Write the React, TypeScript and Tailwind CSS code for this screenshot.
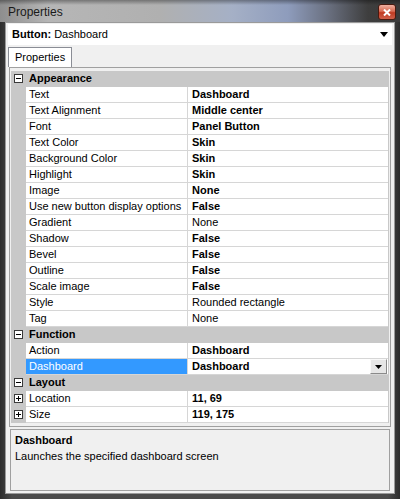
import React from 'react';

type Row = { name: string; value: string; bold?: boolean; selected?: boolean; expand?: boolean };

const appearance: Row[] = [
  { name: 'Text', value: 'Dashboard', bold: true },
  { name: 'Text Alignment', value: 'Middle center', bold: true },
  { name: 'Font', value: 'Panel Button', bold: true },
  { name: 'Text Color', value: 'Skin', bold: true },
  { name: 'Background Color', value: 'Skin', bold: true },
  { name: 'Highlight', value: 'Skin', bold: true },
  { name: 'Image', value: 'None', bold: true },
  { name: 'Use new button display options', value: 'False', bold: true },
  { name: 'Gradient', value: 'None' },
  { name: 'Shadow', value: 'False', bold: true },
  { name: 'Bevel', value: 'False', bold: true },
  { name: 'Outline', value: 'False', bold: true },
  { name: 'Scale image', value: 'False', bold: true },
  { name: 'Style', value: 'Rounded rectangle' },
  { name: 'Tag', value: 'None' },
];

const func: Row[] = [
  { name: 'Action', value: 'Dashboard', bold: true },
  { name: 'Dashboard', value: 'Dashboard', bold: true, selected: true },
];

const layout: Row[] = [
  { name: 'Location', value: '11, 69', bold: true, expand: true },
  { name: 'Size', value: '119, 175', bold: true, expand: true },
];

// little [-] / [+] box in the left margin
function Expander({ plus }: { plus?: boolean }) {
  return (
    <svg width="9" height="9" viewBox="0 0 9 9" className="block">
      <rect x="0.5" y="0.5" width="8" height="8" fill="#ffffff" stroke="#3a3a3a" />
      <line x1="2" y1="4.5" x2="7" y2="4.5" stroke="#000" />
      {plus && <line x1="4.5" y1="2" x2="4.5" y2="7" stroke="#000" />}
    </svg>
  );
}

function Category({ title }: { title: string }) {
  return (
    <div className="flex h-[16px] bg-[#c8c8c8]">
      <div className="w-[15px] flex items-center justify-center pb-[1px]">
        <Expander />
      </div>
      <div className="pl-[3px] font-bold leading-[15px] text-black">{title}</div>
    </div>
  );
}

function PropRow({ row }: { row: Row }) {
  return (
    <div className="flex h-[16px]">
      <div className="w-[15px] shrink-0 bg-[#c8c8c8] flex items-center justify-center pb-[1px]">
        {row.expand && <Expander plus />}
      </div>
      <div
        className={`w-[162px] shrink-0 border-b border-r border-[#d6d6d6] pl-[3px] leading-[15px] whitespace-nowrap overflow-hidden ${
          row.selected ? 'bg-[#3399ff] text-white' : 'bg-white text-black'
        }`}
      >
        {row.name}
      </div>
      <div className="flex-1 flex items-start border-b border-[#d6d6d6] bg-white pl-[4px] leading-[15px] text-black">
        <span className={`flex-1 ${row.bold ? 'font-bold' : ''}`}>{row.value}</span>
        {row.selected && (
          <div className="w-[17px] h-[15px] mr-[1px] flex items-center justify-center bg-[#e6e6e6] border border-[#8a8a8a] border-t-[#f8f8f8] border-l-[#f8f8f8]">
            <svg width="7" height="4" viewBox="0 0 7 4">
              <path d="M0 0h7L3.5 4z" fill="#000" />
            </svg>
          </div>
        )}
      </div>
    </div>
  );
}

export default function App() {
  return (
    <div className="w-[400px] h-[499px] flex flex-col bg-[linear-gradient(to_right,#2c2c2c_0%,#4a4a4a_3%,#4a4a4a_97%,#2c2c2c_100%)] font-['Liberation_Sans',Arial,sans-serif] text-[11px] overflow-hidden">
      {/* title bar */}
      <div className="h-[22px] shrink-0 flex items-center justify-between pl-[8px] pr-[4px] bg-[linear-gradient(to_bottom,rgba(0,0,0,0.35)_0px,rgba(0,0,0,0)_5px),linear-gradient(to_right,#8e8e8e_0%,#b6b6b6_12%,#b0b0b0_40%,#a5b0c6_58%,#8e9cbc_72%,#6a7080_82%,#3e3e3e_92%,#3a3a3a_100%)]">
        <span className="text-[12px] text-[#1a1a1a] leading-none pt-[1px]">Properties</span>
        <div className="w-[18px] h-[16px] mt-[2px] rounded-[3px] border border-[#4a1a10] flex items-center justify-center bg-[linear-gradient(to_bottom,#f0b0a0_0%,#d86a52_45%,#c03a22_55%,#d0604a_100%)]">
          <svg width="8" height="7" viewBox="0 0 8 7">
            <path d="M1 0.5L7 6.5M7 0.5L1 6.5" stroke="#fff" strokeWidth="2" />
          </svg>
        </div>
      </div>

      {/* client area */}
      <div className="flex-1 mx-[5px] mb-[5px] flex flex-col border border-[#9a9a9a] bg-[#f0f0f0]">
        {/* object combo */}
        <div className="h-[21px] mx-[2px] mt-[1px] shrink-0 flex items-center justify-between bg-white pl-[4px] pr-[4px] text-black">
          <span>
            <span className="font-bold">Button:</span> Dashboard
          </span>
          <svg width="8" height="5" viewBox="0 0 8 5">
            <path d="M0 0h8L4 5z" fill="#000" />
          </svg>
        </div>

        {/* tab strip */}
        <div className="h-[22px] shrink-0 flex items-end px-[2px]">
          <div className="h-[20px] px-[6px] flex items-center bg-white border border-b-0 border-[#8a8d95] text-black">
            Properties
          </div>
        </div>

        {/* property grid */}
        <div className="mx-[3px] shrink-0 border border-[#a0a0a0] bg-[#f0f0f0] p-[1px] pt-[3px]">
          <div className="border-r border-[#c8c8c8]">
            <Category title="Appearance" />
            {appearance.map((r) => (
              <PropRow key={r.name} row={r} />
            ))}
            <Category title="Function" />
            {func.map((r) => (
              <PropRow key={r.name + (r.selected ? 's' : '')} row={r} />
            ))}
            <Category title="Layout" />
            {layout.map((r) => (
              <PropRow key={r.name} row={r} />
            ))}
          </div>
          <div className="h-[2px]" />
        </div>

        {/* description */}
        <div className="mx-[4px] mt-[2px] h-[62px] shrink-0 border border-[#a0a0a0] bg-[#f0f0f0] px-[4px] pt-[3px] text-black">
          <div className="font-bold leading-[15px]">Dashboard</div>
          <div className="leading-[15px] mt-[1px]">Launches the specified dashboard screen</div>
        </div>
      </div>
    </div>
  );
}
